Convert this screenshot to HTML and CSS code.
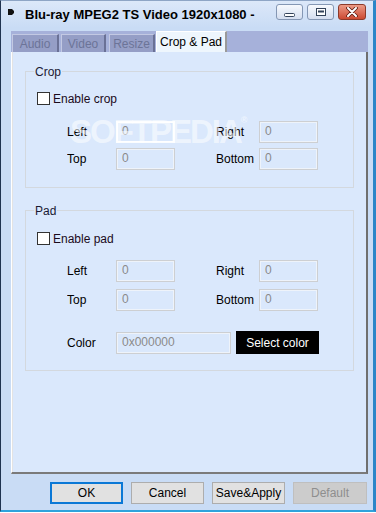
FILE: index.html
```html
<!DOCTYPE html>
<html lang="en">
  <head>
    <meta charset="UTF-8" />
    <meta name="viewport" content="width=device-width, initial-scale=1.0" />
    <title>Blu-ray MPEG2 TS Video 1920x1080</title>
    <link rel="stylesheet" href="styles.css">
  </head>
  <body>
    <div class="window">
      <div class="titlebar">
        <svg class="app-icon" width="6" height="6" viewBox="0 0 6 6">
          <path d="M0 0 H4 L6 2 V4 L4 6 H0 Z" fill="#111" />
        </svg>
        <div class="title">Blu-ray MPEG2 TS Video 1920x1080 -</div>
        <div class="win-buttons">
          <div class="win-btn">
            <svg width="11" height="4" viewBox="0 0 11 4"><rect x="0.5" y="0.5" width="10" height="3" rx="1" fill="#fff" stroke="#33435a" /></svg>
          </div>
          <div class="win-btn">
            <svg width="10" height="8" viewBox="0 0 10 8"><rect x="0.5" y="0.5" width="9" height="7" fill="#fff" stroke="#33435a" /><rect x="2" y="2.5" width="6" height="2" fill="#33435a" /></svg>
          </div>
          <div class="win-btn close">
            <svg width="12" height="10" viewBox="0 0 12 10">
              <path d="M2 1 L10 9 M10 1 L2 9" stroke="#5a1a10" stroke-width="3.6" stroke-linecap="round" />
              <path d="M2 1 L10 9 M10 1 L2 9" stroke="#fff" stroke-width="2" stroke-linecap="round" />
            </svg>
          </div>
        </div>
      </div>

      <div class="tabs">
        <div class="tab tab-audio">Audio</div>
        <div class="tab tab-video">Video</div>
        <div class="tab tab-resize">Resize</div>
        <div class="tab active">Crop &amp; Pad</div>
      </div>

      <div class="panel">
        <div class="watermark">SOFTPEDIA<sup>®</sup></div>

        <div class="group group-crop">
          <div class="group-title">Crop</div>
          <label class="check-row"><span class="checkbox"></span>Enable crop</label>
          <div class="fields crop-fields">
            <span class="lbl">Left</span>
            <div class="field focus">0</div>
            <span class="lbl">Right</span>
            <div class="field">0</div>
            <span class="lbl">Top</span>
            <div class="field">0</div>
            <span class="lbl">Bottom</span>
            <div class="field">0</div>
          </div>
        </div>

        <div class="group group-pad">
          <div class="group-title">Pad</div>
          <label class="check-row"><span class="checkbox"></span>Enable pad</label>
          <div class="fields pad-fields">
            <span class="lbl">Left</span>
            <div class="field">0</div>
            <span class="lbl">Right</span>
            <div class="field">0</div>
            <span class="lbl">Top</span>
            <div class="field">0</div>
            <span class="lbl">Bottom</span>
            <div class="field">0</div>
          </div>
          <div class="color-row">
            <span class="lbl">Color</span>
            <div class="field color-field">0x000000</div>
            <button class="select-color">Select color</button>
          </div>
        </div>
      </div>

      <div class="buttons">
        <button class="btn default-focus">OK</button>
        <button class="btn">Cancel</button>
        <button class="btn">Save&amp;Apply</button>
        <button class="btn disabled">Default</button>
      </div>
    </div>
  </body>
</html>
```

FILE: styles.css
```css
body {
  margin: 0;
  font-family: "Liberation Sans", Arial, sans-serif;
  font-size: 12px;
  color: #000;
  background: #ffffff;
}

.window {
  width: 376px;
  height: 512px;
  box-sizing: border-box;
  display: flex;
  flex-direction: column;
  background: #c9dcf5;
  border-top: 1px solid #8ea5c5;
  border-left: 1px solid #1f3350;
  border-right: 3px solid #2b86c8;
  border-bottom: 2px solid #2fa3dc;
}

/* title bar */
.titlebar {
  height: 27px;
  display: flex;
  align-items: flex-start;
  padding: 0 7px 0 7px;
  background: linear-gradient(#dce8f9, #c9dcf5);
}
.app-icon {
  margin-top: 8px;
  flex: none;
}
.title {
  flex: 1;
  margin-left: 11px;
  margin-top: 6px;
  font-size: 13px;
  line-height: 16px;
  font-weight: bold;
  white-space: nowrap;
  overflow: hidden;
}
.win-buttons {
  display: flex;
  gap: 4px;
  margin-top: 3px;
}
.win-btn {
  width: 25px;
  height: 14px;
  border: 1px solid #8497b4;
  border-radius: 3px;
  background: linear-gradient(#f6f9fd, #d4def0);
  display: flex;
  align-items: center;
  justify-content: center;
}
.win-btn:first-child {
  align-items: flex-end;
}
.win-btn:first-child svg {
  margin-bottom: 2px;
}
.win-btn.close {
  width: 26px;
  border-color: #8c3a2a;
  background: linear-gradient(#ec9a86, #cc4a32);
}

/* tabs */
.tabs {
  margin: 3px 5px 0 10px;
  height: 21px;
  display: flex;
  align-items: flex-end;
  background: #a6b1da;
}
.tab {
  height: 18px;
  line-height: 18px;
  text-align: center;
  box-sizing: border-box;
  color: #6c7498;
  background: #959ec6;
  border-left: 1px solid #c3c9e3;
  border-top: 1px solid #c3c9e3;
  border-right: 2px solid #6a7196;
}
.tab-audio {
  width: 47px;
  margin-left: 1px;
}
.tab-video {
  width: 45px;
  margin-left: 2px;
}
.tab-resize {
  width: 46px;
  margin-left: 3px;
}
.tab.active {
  width: 71px;
  height: 21px;
  line-height: 20px;
  margin-left: 1px;
  color: #000;
  background: #eef6fd;
  border-left: 1px solid #fff;
  border-top: 1px solid #fff;
  border-right: 2px solid #9a9a9a;
}

/* page */
.panel {
  position: relative;
  height: 422px;
  box-sizing: border-box;
  margin: 0 5px 0 10px;
  padding: 19px 12px 0 13px;
  background: #dae8fc;
  border-left: 1px solid #fff;
  border-right: 2px solid #6f6f6f;
  border-bottom: 2px solid #7a7a7a;
  box-shadow: inset 1px 0 0 #e3e3e3;
}
.watermark {
  position: absolute;
  left: 58px;
  top: 61px;
  font-size: 33px;
  font-weight: bold;
  letter-spacing: -2px;
  color: rgba(255, 255, 255, 0.55);
  pointer-events: none;
}
.watermark sup {
  font-size: 9px;
  vertical-align: 20px;
}

.group {
  border: 1px solid #d3d8de;
  padding: 0 0 16px 0;
}
.group-pad {
  margin-top: 22px;
}
.group-title {
  width: fit-content;
  margin: -7px 0 0 8px;
  padding: 0 1px;
  line-height: 14px;
  color: #1a1a33;
  background: #dae8fc;
}
.check-row {
  display: flex;
  align-items: center;
  height: 13px;
  margin: 13px 0 0 11px;
  color: #1b0a1b;
}
.group-pad .check-row {
  margin-top: 14px;
}
.checkbox {
  width: 11px;
  height: 11px;
  border: 1px solid #333;
  background: #fff;
  margin-right: 3px;
}

.fields {
  display: grid;
  grid-template-columns: 49px 59px 41px 43px 59px;
  grid-auto-rows: 22px;
  row-gap: 5px;
  margin: 16px 0 0 41px;
  align-items: center;
}
.crop-fields {
  padding-bottom: 1px;
}
.pad-fields {
  margin-top: 15px;
  row-gap: 7px;
}
.lbl {
  display: block;
  white-space: nowrap;
  overflow: hidden;
  width: 38px;
}
.lbl:nth-child(4n+3) {
  grid-column: 4;
}
.field {
  height: 22px;
  box-sizing: border-box;
  border: 1px solid #cdcfd2;
  box-shadow: inset 0 0 0 1px #eef3fa;
  background: #dae8fc;
  color: #8a8a8a;
  padding: 2px 0 0 5px;
  line-height: 14px;
}
.field.focus {
  border-color: #fbfdff;
  box-shadow: inset 0 0 0 1px #ffffff;
}

.color-row {
  display: flex;
  align-items: center;
  margin: 20px 0 0 41px;
}
.color-row .lbl {
  width: 49px;
}
.color-field {
  width: 115px;
}
.select-color {
  margin-left: 5px;
  width: 83px;
  height: 23px;
  border: none;
  background: #000;
  color: #fff;
  font-family: inherit;
  font-size: 12px;
  padding: 0;
}

/* dialog buttons */
.buttons {
  display: flex;
  justify-content: flex-end;
  gap: 8px;
  margin-top: 8px;
  padding-right: 6px;
}
.btn {
  width: 73px;
  height: 22px;
  padding: 0;
  font-family: inherit;
  font-size: 12px;
  color: #000;
  background: #e1e1e1;
  border: 1px solid #adadad;
}
.btn.default-focus {
  border: 2px solid #0a78d6;
}
.btn.disabled {
  width: 74px;
  color: #8e8e8e;
  background: #cccccc;
  border-color: #bfbfbf;
}
```
